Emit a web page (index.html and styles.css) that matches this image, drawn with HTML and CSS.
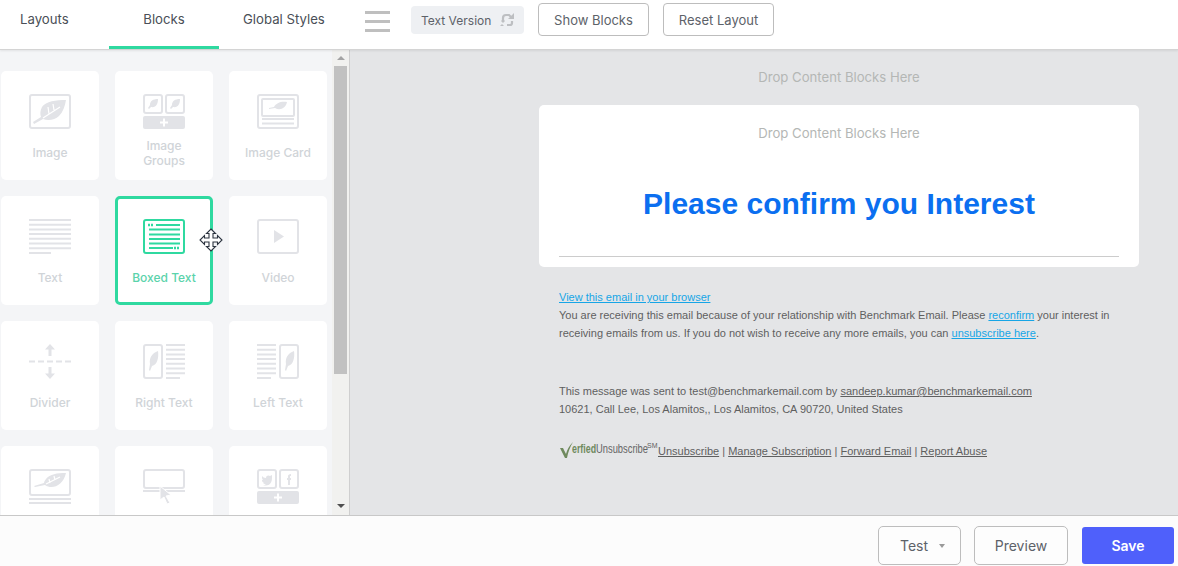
FILE: index.html
```html
<!DOCTYPE html>
<html lang="en">
<head>
<meta charset="utf-8">
<title>Email Editor</title>
<link rel="stylesheet" href="styles.css">
</head>
<body>
<div class="app">
  <header class="topbar">
    <nav class="tabs">
      <a class="tab tab-layouts">Layouts</a>
      <a class="tab tab-blocks">Blocks</a>
      <a class="tab tab-global">Global Styles</a>
    </nav>
    <div class="burger"><i></i><i></i><i></i></div>
    <div class="pill">Text Version
      <svg class="sync" viewBox="0 0 16 14" width="16" height="14"><path d="M4 7V5a3 3 0 0 1 3-3h3l2 2M13 8v2a2 2 0 0 1-2 2H8" fill="none" stroke="#bdbfc2" stroke-width="2.200"/><path d="M9 6h6V0zM2 8l2 2 2-2-2-2zM1 13l2-2 2 2z" fill="#bdbfc2"/></svg>
    </div>
    <button class="btn btn-top btn-show">Show Blocks</button>
    <button class="btn btn-top">Reset Layout</button>
  </header>

  <main class="main">
    <aside class="sidebar">
      <div class="grid">
        <div class="card">
          <svg class="ico" viewBox="0 0 42 35"><rect x="1" y="1" width="40" height="33" rx="2" class="ol"/><path class="fl" d="M37 6C27 6 17 7 13 13c-2 4-2 7-1 10l-8 5 1 2 9-5c5 2 12 1 16-3 4-4 6-10 7-16z"/><path class="vein" d="M14 24l17-11M19 13l1 7M24 10l1 6"/></svg>
          <div class="lbl">Image</div>
        </div>
        <div class="card">
          <svg class="ico" viewBox="0 0 42 35"><rect x="1" y="1" width="18" height="18" rx="2" class="ol"/><rect x="23" y="1" width="18" height="18" rx="2" class="ol"/><path class="fl" d="M15 5c-5 0-8 2-8 6l-2 3 1 1 2-2c5 1 7-3 7-8zM37 5c-5 0-8 2-8 6l-2 3 1 1 2-2c5 1 7-3 7-8z"/><rect y="22" width="42" height="13" rx="2" class="fl"/><path d="M17 28.500h8M21 24.500v8" stroke="#fff" stroke-width="2"/></svg>
          <div class="lbl">Image<br>Groups</div>
        </div>
        <div class="card">
          <svg class="ico" viewBox="0 0 42 35"><rect x="1" y="1" width="40" height="33" rx="2" class="ol"/><rect x="5" y="5" width="32" height="17" rx="1" class="ol"/><path class="fl" d="M30 8c-6-1-11 1-13 5l-5 1v1l6-1c5 3 11 0 12-6z"/><path d="M5 25h32M5 29.500h32" stroke="#e2e3e7" stroke-width="2"/></svg>
          <div class="lbl">Image Card</div>
        </div>
        <div class="card">
          <svg class="ico" viewBox="0 0 42 35"><path class="ln" d="M0 1h42M0 5.700h42M0 10.400h42M0 15.100h42M0 19.800h42M0 24.500h42M0 29.200h42M0 33.900h22"/></svg>
          <div class="lbl">Text</div>
        </div>
        <div class="card card-active">
          <svg class="ico" viewBox="0 0 42 35"><rect x="1" y="1" width="40" height="33" rx="2" fill="none" stroke="#2fd9a0" stroke-width="2"/><path fill="none" stroke="#2fd9a0" stroke-width="2" d="M13 6h24M6 10.500h31M6 15.500h31M6 20h31M6 24.500h31M6 29h24"/><path fill="none" stroke="#2fd9a0" stroke-width="2.500" stroke-dasharray="2 1" d="M5 6h6M31 29h6"/></svg>
          <div class="lbl">Boxed Text</div>
        </div>
        <div class="card">
          <svg class="ico" viewBox="0 0 42 35"><rect x="1" y="1" width="40" height="33" rx="2" class="ol"/><path class="fl" d="M17 11l10 6.500L17 24z"/></svg>
          <div class="lbl">Video</div>
        </div>
        <div class="card">
          <svg class="ico" viewBox="0 0 42 35"><path class="ln" stroke-dasharray="6 3" d="M0 17.500h42"/><path class="fl" d="M21 0l5 5.500h-3.500V12h-3V5.500H16zM21 35l-5-5.500h3.500V23h3v6.500H26z"/></svg>
          <div class="lbl">Divider</div>
        </div>
        <div class="card">
          <svg class="ico" viewBox="0 0 42 35"><rect x="1" y="1" width="18" height="33" rx="2" class="ol"/><path class="fl" d="M15 7c-6 2-9 7-8 13l-1 6 1 1 2-5c5-1 7-8 6-15z"/><path class="ln" d="M23 1h19M23 5.700h19M23 10.400h19M23 15.100h19M23 19.800h19M23 24.500h19M23 29.200h19M23 33.900h14"/></svg>
          <div class="lbl">Right Text</div>
        </div>
        <div class="card">
          <svg class="ico" viewBox="0 0 42 35"><rect x="23" y="1" width="18" height="33" rx="2" class="ol"/><path class="fl" d="M37 7c-6 2-9 7-8 13l-1 6 1 1 2-5c5-1 7-8 6-15z"/><path class="ln" d="M0 1h19M0 5.700h19M0 10.400h19M0 15.100h19M0 19.800h19M0 24.500h19M0 29.200h19M0 33.900h14"/></svg>
          <div class="lbl">Left Text</div>
        </div>
        <div class="card">
          <svg class="ico" viewBox="0 0 42 35"><rect x="1" y="1" width="40" height="25" rx="2" class="ol"/><path class="fl" d="M37 4C28 4 21 5 17 10c-1 1-2 3-2 4l-10 3 1 1 10-2c7 5 18 1 21-12z"/><path class="vein" d="M17 15l14-7M20 10l1 4M25 7l1 4"/><path d="M0 30h42M0 34h42" stroke="#e2e3e7" stroke-width="2"/></svg>
        </div>
        <div class="card">
          <svg class="ico" viewBox="0 0 42 35"><rect x="1" y="1" width="40" height="18" rx="2" class="ol"/><path d="M0 22h42" stroke="#e2e3e7" stroke-width="2"/><path class="fl cur" d="M17 17l11 9-5 1 4 7-3 1-3-7-4 3z"/></svg>
        </div>
        <div class="card">
          <svg class="ico" viewBox="0 0 42 35"><rect x="1" y="1" width="18" height="18" rx="2" class="ol"/><rect x="23" y="1" width="18" height="18" rx="2" class="ol"/><path class="fl" d="M15 6l-2 1c-1-1-4-1-4 2-2 0-3-1-4-2 0 2 0 3 1 4H5c0 2 1 2 2 3H6c1 1 2 1 3 1-1 1-2 1-3 1 6 2 9-2 9-7z"/><path class="fl" d="M31 16v-5h-1V9h1V7c0-1 1-2 3-2v2h-1v2h1v2h-1v5z"/><rect y="22" width="42" height="13" rx="2" class="fl"/><path d="M17 28.500h8M21 24.500v8" stroke="#fff" stroke-width="2"/></svg>
        </div>
      </div>
      <div class="scrollbar">
        <div class="arrow arrow-up"></div>
        <div class="track"><div class="thumb"></div></div>
        <div class="arrow arrow-down"></div>
      </div>
    </aside>

    <section class="canvas">
      <div class="column">
        <div class="drop drop-outer">Drop Content Blocks Here</div>
        <div class="mail">
          <div class="drop drop-inner">Drop Content Blocks Here</div>
          <h1 class="headline">Please confirm you Interest</h1>
          <div class="rule"></div>
        </div>
        <div class="foot">
          <p class="para"><a class="blue">View this email in your browser</a><br>
          You are receiving this email because of your relationship with Benchmark Email. Please <a class="blue">reconfirm</a> your interest in receiving emails from us. If you do not wish to receive any more emails, you can <a class="blue">unsubscribe here</a>.</p>
          <p class="para para-sent">This message was sent to test@benchmarkemail.com by <a class="dark">sandeep.kumar@benchmarkemail.com</a><br>
          10621, Call Lee, Los Alamitos,, Los Alamitos, CA 90720, United States</p>
          <p class="links"><span class="logo"><svg class="tick" viewBox="0 0 13 16" width="13" height="16"><path d="M0 6h3l3 6c1-4 3-8 7-12-3 5-5 10-6 16H5z" fill="#6f8a5e"/></svg><b class="verified">erfied</b><span class="unsub">Unsubscribe</span><sup class="sm">SM</sup></span><span class="linkrow"><a class="dark">Unsubscribe</a> | <a class="dark">Manage Subscription</a> | <a class="dark">Forward Email</a> | <a class="dark">Report Abuse</a></span></p>
        </div>
      </div>
    </section>
  </main>

  <footer class="bottombar">
    <button class="btn btn-bottom btn-test">Test<span class="caret"></span></button>
    <button class="btn btn-bottom btn-preview">Preview</button>
    <button class="btn-save">Save</button>
  </footer>

  <svg class="move" viewBox="0 0 24 24" width="24" height="24"><path d="M12 1l4.500 4.500h-2.500v4.500h4.500V7.500L23 12l-4.500 4.500V14H14v4.500h2.500L12 23l-4.500-4.500H10V14H5.500v2.500L1 12l4.500-4.500V10H10V5.500H7.500z" fill="#fff" stroke="#2c3440" stroke-width="1.100"/></svg>
</div>
</body>
</html>
```
FILE: styles.css
```css
* { box-sizing: border-box; }
html, body { margin: 0; height: 100%; overflow: hidden; }
body { font-family: Inter, "Liberation Sans", sans-serif; background: #fff; color: #4a4f57; }
.app { position: relative; width: 1178px; height: 566px; display: flex; flex-direction: column; }

.topbar { height: 50px; flex: none; display: flex; align-items: flex-start; background: #fff; border-bottom: 1px solid #d4d4d4; box-shadow: 0 1px 2px rgba(0,0,0,.08); position: relative; z-index: 2; }
.tabs { display: flex; height: 49px; }
.tab { display: block; height: 49px; font-size: 13.200px; line-height: 39px; color: #4a4f57; text-align: center; }
.tab-layouts { width: 109px; padding-left: 20px; text-align: left; }
.tab-blocks { width: 110px; border-bottom: 3px solid #2fd9a0; }
.tab-global { padding-left: 24px; width: 146px; text-align: left; white-space: nowrap; }
.burger { margin: 11px 0 0 0; width: 25px; display: flex; flex-direction: column; gap: 6px; }
.burger i { display: block; height: 3px; background: #bfbfbf; }
.pill { margin: 6px 0 0 21px; width: 113px; height: 28px; background: #eef0f3; border-radius: 4px; display: flex; align-items: center; gap: 8px; padding-left: 10px; font-size: 12px; color: #5d6269; white-space: nowrap; }
.btn { background: #fff; border: 1px solid #bdbdbd; border-radius: 4px; font-family: inherit; color: #5d6269; padding: 0; }
.btn-top { margin: 3px 0 0 14px; width: 111px; height: 33px; font-size: 13px; }

.main { flex: 1; min-height: 0; display: flex; }
.sidebar { width: 350px; flex: none; background: #f4f5f7; position: relative; overflow: hidden; display: flex; }
.grid { width: 332px; padding: 21px 0 0 1px; display: grid; grid-template-columns: repeat(3, 98px); grid-auto-rows: 109px; gap: 16px; }
.card { background: #fff; border-radius: 5px; padding: 23px 0 4px; display: flex; flex-direction: column; align-items: center; }
.card-active { border: 3px solid #2fd9a0; padding: 20px 0 1px; }
.card-active .lbl { color: #5bd3ab; }
.ico { width: 42px; height: 35px; flex: none; display: block; }
.ol { fill: none; stroke: #e2e3e7; stroke-width: 2; }
.fl { fill: #e2e3e7; }
.ln { fill: none; stroke: #e2e3e7; stroke-width: 2; }
.vein { fill: none; stroke: #fff; stroke-width: 1.200; }
.cur { stroke: #fff; stroke-width: 1; }
.lbl { flex: 1; display: flex; align-items: center; justify-content: center; text-align: center; font-size: 12px; line-height: 15px; font-weight: 500; color: #d0d4d8; }
.scrollbar { width: 18px; flex: none; background: #f1f1ef; border-right: 1px solid #cfcfcf; display: flex; flex-direction: column; align-items: center; }
.arrow { width: 0; height: 0; flex: none; border-left: 4px solid transparent; border-right: 4px solid transparent; }
.arrow-up { border-bottom: 4px solid #a3a3a3; margin: 6px 0 6px; }
.arrow-down { border-top: 4px solid #4f4f4f; margin: 6px 0 7px; }
.track { flex: 1; width: 100%; padding: 0 2px; }
.thumb { height: 308px; width: 13px; background: #c1c1c1; }

.canvas { flex: 1; background: #e4e5e7; overflow: hidden; padding-left: 189px; }
.column { width: 600px; }
.drop { text-align: center; font-size: 13.150px; color: #b4b7b5; }
.drop-outer { height: 55px; line-height: 55px; }
.mail { height: 162px; background: #fff; border-radius: 5px; padding: 0 20px; display: flex; flex-direction: column; }
.drop-inner { height: 56px; line-height: 56px; }
.headline { margin: 0; height: 95px; font: bold 30px/86px "Liberation Sans", Arial, sans-serif; color: #0b6ff0; text-align: center; }
.rule { border-top: 1px solid #ccc; }
.foot { padding: 21px 20px 0; font: 11px/18px "Liberation Sans", Arial, sans-serif; color: #5f5f5f; }
.para { margin: 0; }
.para-sent { margin-top: 40px; }
.blue { color: #16a5e6; text-decoration: underline; }
.dark { color: #5f5f5f; text-decoration: underline; }
.links { margin: 15px 0 0; white-space: nowrap; display: flex; align-items: flex-end; height: 27px; }
.logo { display: flex; align-items: flex-end; width: 99px; height: 24px; flex: none; }
.tick { flex: none; margin: 0 -1px 2px 1px; }
.verified { display: block; width: 24px; flex: none; font-size: 13px; line-height: 18px; color: #6f8a5e; transform: scaleX(.68); transform-origin: left; margin-bottom: 2px; }
.unsub { display: block; width: 50px; flex: none; font-size: 13px; line-height: 18px; color: #666; transform: scaleX(.72); transform-origin: left; margin-bottom: 2px; }
.sm { font-size: 7px; line-height: 10px; align-self: flex-start; margin: 5px 0 0 1px; }
.linkrow { display: block; line-height: 18px; }

.bottombar { height: 51px; flex: none; background: #fcfcfc; border-top: 1px solid #c8c8c8; display: flex; align-items: flex-start; padding-left: 878px; position: relative; z-index: 2; }
.btn-bottom { margin-top: 10px; height: 39px; font-size: 14px; border-radius: 5px; background: #fdfdfd; }
.btn-test { width: 83px; margin-right: 13px; display: flex; align-items: center; padding-left: 21px; }
.caret { width: 0; height: 0; margin-left: 11px; border-left: 3px solid transparent; border-right: 3px solid transparent; border-top: 4px solid #9a9a9a; }
.btn-preview { width: 94px; margin-right: 14px; }
.btn-save { margin-top: 11px; width: 92px; height: 37px; background: #4f60fb; color: #fff; border: 0; border-radius: 3px; font: 600 14px Inter, sans-serif; }

.move { position: absolute; left: 199px; top: 228px; z-index: 5; }
```
